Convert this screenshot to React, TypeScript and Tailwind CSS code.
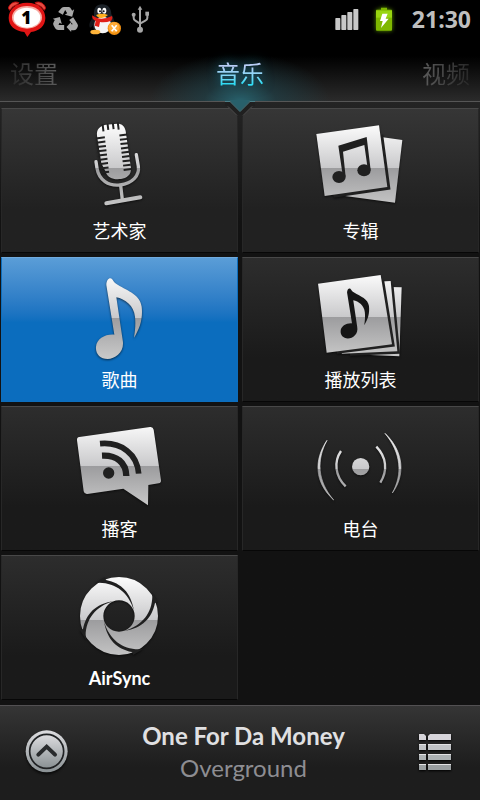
import { useId, type ReactNode } from "react";

const songNote =
  "M139 90 C139 74 149 66 156 72 C161 77 160 82 173 89 C205 108 241 120 245 155 C249 190 240 220 222 248 C226 225 227 205 225 185 C222 152 195 132 169 127 L188 255 C195 290 167 312 143 312 C120 312 106 296 108 275 C110 252 135 237 163 239 Z";

function TileIcon({ viewBox, split, children }: { viewBox: string; split: number; children: (fill: string) => ReactNode }) {
  const id = useId().replace(/[^a-zA-Z0-9]/g, "");
  return (
    <svg className="h-[104px] w-[121px] drop-shadow-[0_1px_1px_rgba(0,0,0,0.6)]" viewBox={viewBox} aria-hidden="true">
      <defs>
        <linearGradient id={id} gradientUnits="userSpaceOnUse" x1="0" x2="0" y1={split - 125} y2={split + 125}>
          <stop offset="0" stopColor="#fafafa" />
          <stop offset="0.5" stopColor="#c9c9cb" />
          <stop offset="0.5" stopColor="#9c9c9e" />
          <stop offset="1" stopColor="#cacaca" />
        </linearGradient>
      </defs>
      {children(`url(#${id})`)}
    </svg>
  );
}

const DARK = "#202020";

function MicIcon() {
  const rows = [-46, -33, -20, -7, 6, 19, 32, 45, 58];
  return (
    <TileIcon viewBox="-3 12 363 312" split={189}>
      {(fill) => (
        <>
          <path
            fill={fill}
            d="M111 92 C109 72 120 62 138 59 L172 56 C187 56 194 64 197 78 L213 190 C214 210 200 220 183 222 C160 224 143 220 137 200 L124 175 Z"
          />
          <g transform="translate(161 140) rotate(-7)" stroke={DARK} strokeWidth="6">
            {rows.map((y) => (
              <path key={y} d={`M-48 ${y}H-21M23 ${y}H46`} />
            ))}
            <path d="M-23 -86V-64M-8 -86V-67M8 -86V-67M23 -86V-64" />
          </g>
          <g fill="none" stroke={fill} strokeLinecap="round">
            <path strokeWidth="10" d="M108 170 L111 190 C117 226 146 244 180 240 C217 235 239 213 235 184 L229 149" />
            <path strokeWidth="10" d="M182 242 L187 284" />
            <path strokeWidth="12" d="M139 295 L241 277" />
          </g>
        </>
      )}
    </TileIcon>
  );
}

function AlbumIcon() {
  return (
    <TileIcon viewBox="0 12 363 312" split={189}>
      {(fill) => (
        <>
          <path fill={fill} d="M200 90 L307 105 L285 293 L118 271 Z" />
          <path fill="none" stroke={DARK} strokeWidth="17" d="M241 90 L262 246 L100 270" />
          <path fill={fill} d="M49 87 L237 61 L262 246 L74 273 Z" />
          <g fill={DARK}>
            <path d="M115 122 L200 96 L212 196 L202 184 L193 120 L129 140 L137 216 L127 203 Z" />
            <ellipse cx="117" cy="216" rx="20" ry="18" />
            <ellipse cx="192" cy="196" rx="20" ry="18" />
          </g>
        </>
      )}
    </TileIcon>
  );
}

function SongIcon() {
  return (
    <TileIcon viewBox="-3 9 363 312" split={188}>
      {(fill) => <path fill={fill} d={songNote} />}
    </TileIcon>
  );
}

function PlaylistIcon() {
  return (
    <TileIcon viewBox="0 9 363 312" split={186}>
      {(fill) => (
        <>
          <path fill={fill} d="M230 95 L305 97 L298 304 L160 298 Z" />
          <path fill="none" stroke={DARK} strokeWidth="15" d="M273 90 L292 289 L150 295" />
          <path fill={fill} d="M200 82 L272 78 L292 289 L125 296 Z" />
          <path fill="none" stroke={DARK} strokeWidth="15" d="M245 76 L276 268 L110 289" />
          <path fill={fill} d="M54 86 L242 60 L276 268 L80 293 Z" />
          <path fill="#151515" transform="translate(55 57) scale(.62)" d={songNote} />
        </>
      )}
    </TileIcon>
  );
}

function PodcastIcon() {
  return (
    <TileIcon viewBox="-3 6 363 312" split={183}>
      {(fill) => (
        <>
          <path
            fill={fill}
            d="M58 96 L270 66 Q279 65 281 74 L303 226 Q304 234 296 235 L265 240 L264 301 L190 251 L82 267 Q73 268 71 259 L51 106 Q50 97 58 96 Z"
          />
          <circle cx="146" cy="204" r="17" fill={DARK} />
          <g fill="none" stroke={DARK}>
            <path strokeWidth="19" d="M126 152 C170 150 198 172 199 213" />
            <path strokeWidth="17" d="M120 116 C185 110 232 148 236 206" />
          </g>
        </>
      )}
    </TileIcon>
  );
}

function RadioIcon() {
  return (
    <TileIcon viewBox="0 6 363 312" split={192}>
      {(fill) => (
        <>
          <circle cx="182" cy="185" r="26" fill={fill} />
          <g fill={fill} stroke={fill} strokeWidth="2">
            <path d="M81 106 C41 165 43 232 101 285 C52 228 49 165 81 106 Z" />
            <path d="M255 85 C313 140 316 212 277 264 C308 208 304 145 255 85 Z" />
          </g>
          <g fill="none" stroke={fill} strokeWidth="7">
            <path d="M123 138 C101 170 105 213 137 244" />
            <path d="M229 125 C259 156 264 195 241 233" />
          </g>
        </>
      )}
    </TileIcon>
  );
}

function AirSyncIcon() {
  return (
    <TileIcon viewBox="-3 3 363 312" split={195}>
      {(fill) => (
        <>
          <circle cx="177" cy="183" r="82" fill="none" stroke={fill} strokeWidth="70" />
          {[0, 90, 180, 270].map((angle) => (
            <path
              key={angle}
              fill={DARK}
              transform={`rotate(${angle} 177 183)`}
              d="M104 85 L118 83 C168 84 205 112 222 166 C212 112 185 85 138 75 L134 66 Z"
            />
          ))}
        </>
      )}
    </TileIcon>
  );
}

const tiles = [
  { label: "艺术家", icon: <MicIcon />, shape: "[clip-path:polygon(0_0,calc(100%-9px)_0,100%_9px,100%_100%,0_100%)]", tone: "from-[#363636] to-[#212121]" },
  { label: "专辑", icon: <AlbumIcon />, shape: "[clip-path:polygon(9px_0,100%_0,100%_100%,0_100%,0_9px)]", tone: "from-[#363636] to-[#212121]" },
  { label: "歌曲", icon: <SongIcon />, active: true },
  { label: "播放列表", icon: <PlaylistIcon /> },
  { label: "播客", icon: <PodcastIcon /> },
  { label: "电台", icon: <RadioIcon /> },
  { label: "AirSync", icon: <AirSyncIcon />, bold: true },
];

function StatusBar() {
  return (
    <header className="flex h-[38px] items-center bg-black pr-[9px] pl-[7px]">
      <svg className="h-[38px] w-[40px]" viewBox="0 0 120 114" aria-label="1">
        <g stroke="#b00c0c" strokeWidth="3" fill="#e84a40">
          <path d="M4 24 C8 10 22 2 36 8 L30 14 C20 17 14 22 8 31 Z" />
          <path d="M116 24 C112 10 98 2 84 8 L90 14 C100 17 106 22 112 31 Z" />
        </g>
        <path fill="#e01515" d="M60 8 C96 8 115 28 115 54 C115 78 96 93 72 96 L61 111 L52 96 C24 93 5 78 5 54 C5 28 26 8 60 8 Z" />
        <ellipse cx="60" cy="52" rx="45" ry="34" fill="#f8aaa2" />
        <ellipse cx="60" cy="53" rx="40" ry="30" fill="#fff" />
        <text x="58" y="73" textAnchor="middle" className="fill-black font-['Open_Sans',sans-serif] text-[52px] font-extrabold">1</text>
      </svg>
      <svg className="ml-[5px] h-[26px] w-[27px]" viewBox="0 0 80 78" fill="#a8a8a8" aria-hidden="true">
        <path d="M26 8 Q29 3 35 3 H50 Q54 3 57 9 L60 14 L66 10 L60 32 L38 26 L45 22 L39 12 L32 26 L18 18 Z" />
        <path d="M63 34 L76 54 Q79 59 76 64 L73 69 Q70 73 64 73 H57 V78 L43 63 L57 48 V55 H62 L51 42 Z" />
        <path d="M36 57 V72 H18 Q12 72 9 67 L4 58 Q1 53 5 47 L8 42 L2 38 L23 33 L29 54 L22 50 L19 57 Z" />
      </svg>
      <svg className="ml-[9px] h-[32px] w-[33px]" viewBox="0 0 99 96" aria-label="QQ">
        <path fill="#1c2228" d="M42 4 C60 4 70 16 70 34 C80 48 80 68 76 78 L18 80 C12 66 14 48 18 36 C16 16 26 4 42 4 Z" />
        <path fill="#14191d" d="M17 42 C6 52 1 66 6 74 C13 72 16 64 20 56 Z" />
        <ellipse cx="44" cy="66" rx="25" ry="25" fill="#f6f6f6" />
        <ellipse cx="34" cy="23" rx="6" ry="9" fill="#fff" />
        <ellipse cx="49" cy="23" rx="6" ry="9" fill="#fff" />
        <circle cx="36" cy="25" r="3" fill="#111" />
        <circle cx="47" cy="25" r="3" fill="#111" />
        <path fill="#ffb020" d="M24 36 Q42 29 60 36 Q48 47 38 45 Q28 43 24 36 Z" />
        <path fill="#e02018" d="M13 37 Q36 56 72 39 Q76 46 70 53 Q52 60 36 57 L33 72 L20 68 L23 54 Q10 48 13 37 Z" />
        <ellipse cx="22" cy="87" rx="15" ry="7" fill="#ffb43a" />
        <circle cx="79" cy="76" r="20" fill="#f29111" />
        <circle cx="78" cy="73" r="16" fill="#ffab37" />
        <path d="M71 67 L86 85 M86 67 L71 85" stroke="#fff" strokeWidth="5" />
      </svg>
      <svg className="ml-[10px] h-[28px] w-[18px]" viewBox="0 0 54 84" fill="#a6a6a6" aria-hidden="true">
        <path d="M27 2 L34 14 H20 Z" />
        <circle cx="27" cy="74" r="9" />
        <circle cx="8" cy="29" r="6" />
        <path d="M43 20 H54 V32 H43 Z" />
        <path fill="none" stroke="#a6a6a6" strokeWidth="6" d="M27 12 V70 M8 30 V39 Q8 44 13 47 L27 56 M49 30 V39 Q49 44 43 47 L27 56" />
      </svg>
      <svg className="ml-auto h-[24px] w-[25px]" viewBox="0 0 75 72" fill="#c8c8c8" aria-label="signal">
        <rect x="4" y="33" width="15" height="36" rx="2" />
        <rect x="22" y="24" width="15" height="45" rx="2" />
        <rect x="40" y="15" width="15" height="54" rx="2" />
        <rect x="58" y="6" width="15" height="63" rx="2" />
      </svg>
      <svg className="ml-[16px] h-[26px] w-[18px] drop-shadow-[0_0_2px_#5c9400]" viewBox="0 0 54 78" aria-label="battery">
        <path fill="#7fb800" d="M5 11 H18 V5 H36 V11 H49 Q51 11 51 14 V71 Q51 74 48 74 H6 Q3 74 3 71 V14 Q3 11 5 11 Z" />
        <path fill="#98d510" d="M3 14 H51 V35 H3 Z" />
        <path fill="#fff" d="M22 23 H38 L32 38 H41 L18 66 L23 45 H15 Z" />
      </svg>
      <time className="ml-[19px] font-['Open_Sans','Noto_Sans',sans-serif] text-[23px] leading-[38px] font-bold text-[#bebebe]">21:30</time>
    </header>
  );
}

export default function App() {
  return (
    <div className="flex min-h-screen flex-col bg-[#121212] font-['Lato','Noto_Sans_CJK_SC',sans-serif] text-white">
      <StatusBar />
      <nav className="relative flex h-[64px] items-center justify-between border-b border-[#565656] bg-[radial-gradient(ellipse_90px_48px_at_50%_100%,#28616c,#1e454e90_40%,transparent),linear-gradient(to_bottom,#000_18px,#2b2b2b)] px-[10px] pt-[16px] pb-[8px] text-[24px] leading-[36px]">
        <button className="bg-linear-to-r from-[#282828] to-[#5c5c5c] bg-clip-text text-transparent">设置</button>
        <button className="bg-linear-to-b from-[#b8cdf5] from-30% to-[#30dcf5] to-75% bg-clip-text text-transparent drop-shadow-[0_0_6px_#15738c]" aria-current="page">
          音乐
        </button>
        <button className="bg-linear-to-r from-[#5c5c5c] to-[#282828] bg-clip-text text-transparent">视频</button>
        <svg className="absolute top-[62px] left-1/2 z-10 h-[20px] w-[30px] -translate-x-1/2" viewBox="0 0 30 20" aria-hidden="true">
          <path fill="#202020" d="M0 2 H30 V6 H27 L18 15 H12 L3 6 H0 Z" />
          <path fill="#28606b" d="M5 0 H25 V1 L15 11 L5 1 Z" />
          <path fill="none" stroke="#4b7e87" d="M0 1.500 H5 L15 11.500 L25 1.500 H30" />
          <path fill="none" stroke="#505050" d="M3 6.500 L12 15.500 M27 6.500 L18 15.500" />
        </svg>
      </nav>
      <main className="grow bg-linear-to-b from-[#242424] to-[#121212] to-20% px-px pt-[6px] pb-[5px]">
        <div className="grid grid-cols-2 gap-1">
          {tiles.map((tile) => (
            <button
              key={tile.label}
              className={`flex h-[145px] flex-col items-center border bg-linear-to-b ${tile.shape ?? ""} ${
                tile.active
                  ? "border-[#0d6ebd] border-t-[#70aadc] from-[#5a9dd7] to-[#0b6dbe] to-45%"
                  : `border-[#272727] border-t-[#484848] border-b-[#070707] to-70% ${tile.tone ?? "from-[#2d2d2d] to-[#1a1a1a]"}`
              }`}
            >
              {tile.icon}
              <span className={`mt-[4px] text-[18px] leading-[28px] ${tile.bold ? "font-bold" : ""}`}>{tile.label}</span>
            </button>
          ))}
        </div>
      </main>
      <footer className="flex h-[95px] items-center justify-between border-t border-[#525052] bg-linear-to-b from-[#353535] to-[#1d1d1d] to-65% pr-[28px] pb-[2px] pl-[25px]">
        <button aria-label="展开">
          <svg className="h-[44px] w-[44px] drop-shadow-[0_2px_1px_#0a0a0a]" viewBox="0 0 132 132" aria-hidden="true">
            <defs>
              <linearGradient id="knob" x1="0" x2="0" y1="0" y2="1">
                <stop offset="0" stopColor="#dddde0" />
                <stop offset="1" stopColor="#899093" />
              </linearGradient>
            </defs>
            <circle cx="65" cy="64" r="63" fill="url(#knob)" />
            <circle cx="65" cy="64" r="51" fill="url(#knob)" stroke="#202224" strokeWidth="5" />
            <path d="M40 74 L65 50 L90 74" fill="none" stroke="#292b2d" strokeWidth="12" strokeLinecap="round" />
          </svg>
        </button>
        <div className="text-center text-[24px] leading-[32px]">
          <p className="font-bold text-[#e0e0e2]">One For Da Money</p>
          <p className="text-[#8d8d92]">Overground</p>
        </div>
        <button aria-label="列表">
          <svg className="h-[38px] w-[34px] drop-shadow-[0_1px_1px_#000]" viewBox="0 0 102 114" aria-hidden="true">
            <path fill="#d6d4d9" d="M3 3 H18 L24 9 V21 H3 Z M30 9 L36 3 H99 V21 H30 Z" />
            <path fill="#c0c2c5" d="M3 33 H24 V51 H3 Z M30 33 H99 V51 H30 Z" />
            <path fill="#acb1b3" d="M3 63 H24 V81 H3 Z M30 63 H99 V81 H30 Z" />
            <path fill="#999ea0" d="M3 93 H24 V111 H3 Z M30 93 H99 V111 H30 Z" />
            <path stroke="#e2e2e4" strokeWidth="3" d="M3 34.500 H24 M30 34.500 H99 M3 64.500 H24 M30 64.500 H99 M3 94.500 H24 M30 94.500 H99" />
          </svg>
        </button>
      </footer>
    </div>
  );
}
